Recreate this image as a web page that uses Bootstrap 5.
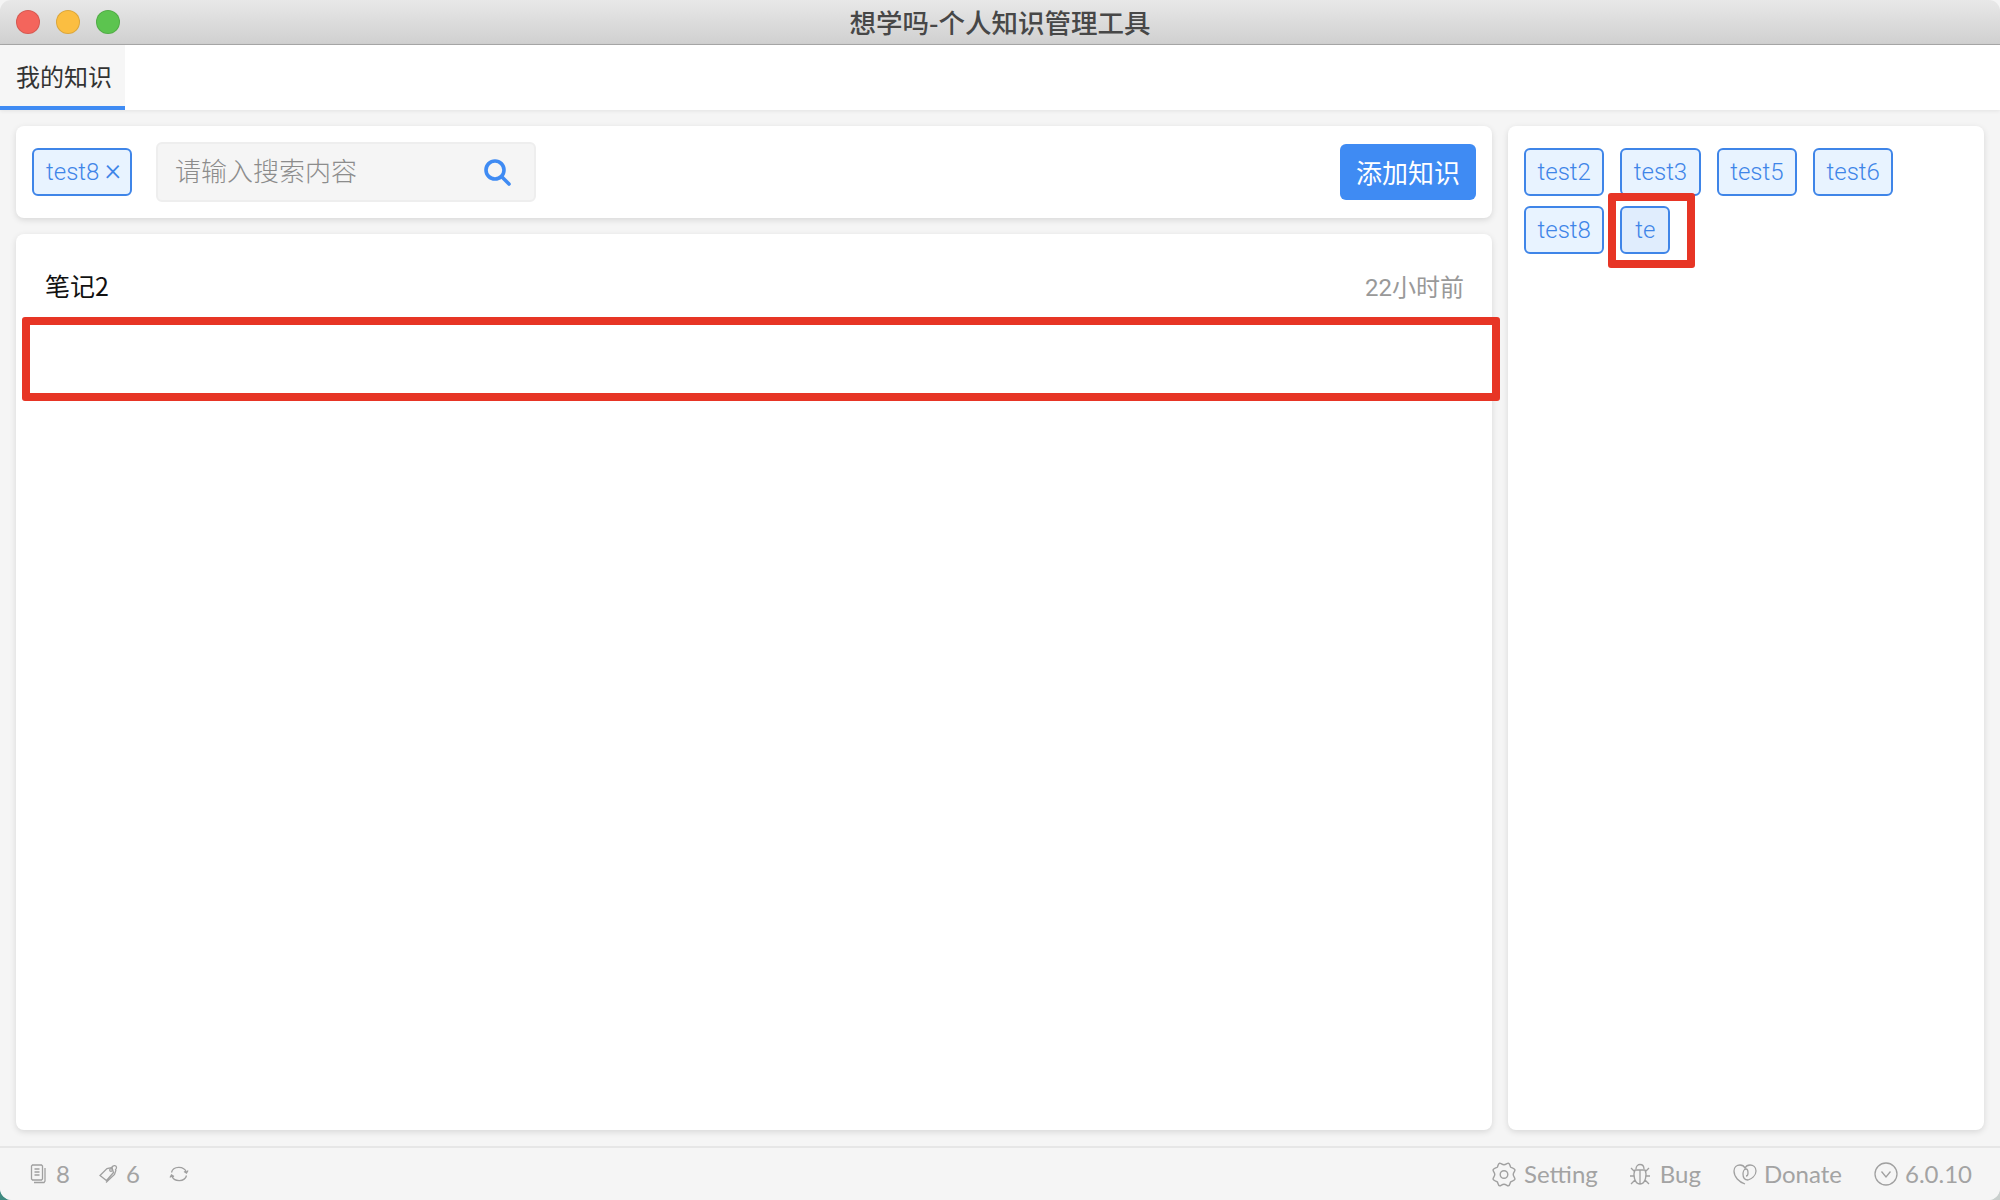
<!DOCTYPE html>
<html lang="zh">
<head>
<meta charset="utf-8">
<title>想学吗-个人知识管理工具</title>
<link href="https://cdn.jsdelivr.net/npm/bootstrap@5.3.0/dist/css/bootstrap.min.css" rel="stylesheet">
<style>
html,body{height:100%;}
body{margin:0;background:linear-gradient(180deg,#f4f4f4 0 600px,transparent 600px),linear-gradient(90deg,#3f8a80 0 50%,#c9cfcd 50% 100%);font-family:Roboto,"Noto Sans CJK SC",sans-serif;font-weight:300;overflow:hidden;}
.win{height:1200px;width:2000px;background:#f5f5f5;border-radius:11px 11px 12px 12px;overflow:hidden;}
.titlebar{height:45px;flex:none;background:linear-gradient(180deg,#e8e8e8,#d0d0d0);border-bottom:1px solid #a8a8a8;position:relative;}
.tl{width:24px;height:24px;border-radius:50%;border:1px solid rgba(0,0,0,.12);}
.tl-r{background:#f4655c;}.tl-y{background:#fbbe41;}.tl-g{background:#5cc44f;}
.wintitle{font-size:26.500px;font-weight:500;color:#474747;font-family:"Noto Sans CJK SC",sans-serif;line-height:44px;}
.tabbar{height:65px;flex:none;background:#fff;box-shadow:0 1px 4px rgba(0,0,0,.08);position:relative;z-index:1;}
.tabitem{width:125px;height:65px;background:#f6f6f6;border-bottom:4px solid #3f8bf3;font-size:24px;color:#333;font-family:"Noto Sans CJK SC",sans-serif;font-weight:400;padding-top:14px;padding-left:16px;line-height:34px;}
.mainarea{flex:1;padding:16px;gap:16px;min-height:0;}
.leftcol{width:1476px;gap:16px;}
.panel{background:#fff;border-radius:8px;box-shadow:0 2px 6px rgba(0,0,0,.12);position:relative;}
.searchpanel{height:92px;padding:0 16px;}
.chip{height:48px;border:2px solid #3f85e8;background:#e8f3ff;color:#3f85e8;border-radius:6px;font-size:24px;line-height:45px;padding:0 11.500px;white-space:nowrap;}
.chip-cur{background:#e0edfd;padding:0 13px;}
.chip-first{width:100px;margin-right:24px;display:flex;align-items:center;justify-content:space-between;padding:0 12px;}
.chipx{font-size:31px;line-height:40px;margin:0 -3px 4px 0;}
.searchbox{width:380px;height:60px;background:#f5f5f5;border:2px solid #eee;border-radius:6px;padding:0 23px 6px 17px;font-size:26px;color:#8c8c8c;font-family:"Noto Sans CJK SC",sans-serif;}
.searchbox svg{margin-top:5px;}
.addbtn{width:136px;height:56px;background:#3f8bf3;border-radius:6px;color:#fff;font-size:26px;font-family:"Noto Sans CJK SC",sans-serif;border:0;padding:0;line-height:50px;}
.addbtn:hover{background:#3f8bf3;color:#fff;}
.listpanel{flex:1;padding:32px 28px 0 29px;}
.notename{font-size:25px;color:#111;font-family:"Noto Sans CJK SC",Roboto,sans-serif;font-weight:400;line-height:38px;}
.notetime{font-size:24px;font-weight:400;color:#999;line-height:44px;}
.tagpanel{width:476px;flex:none;padding:22px 15px 22px 16px;align-content:flex-start;column-gap:16px;row-gap:10px;}
.redmark{position:absolute;border:8px solid #e73525;border-radius:3px;pointer-events:none;}
.mark-note{left:6px;top:83px;width:1478px;height:84px;}
.mark-tag{left:100px;top:67px;width:87px;height:75px;}
.statusbar{height:54px;flex:none;border-top:2px solid #e6e6e6;background:#f5f5f5;font-family:Lato,sans-serif;font-weight:400;font-size:24px;color:#a3a3a3;padding:0 28px 0 30px;}
.statusbar svg{fill:none;stroke:#a0a0a0;stroke-width:1.3;display:block;}
.statgrp{gap:9px;}
.sleft{gap:29px;}
.sright{gap:32px;}
</style>
</head>
<body>
<div class="win d-flex flex-column">
  <div class="titlebar d-flex align-items-center justify-content-center">
    <div class="d-flex position-absolute top-0 start-0" style="gap:16px;padding:10px 0 0 16px">
      <span class="tl tl-r"></span><span class="tl tl-y"></span><span class="tl tl-g"></span>
    </div>
    <span class="wintitle">想学吗-个人知识管理工具</span>
  </div>
  <div class="tabbar"><div class="tabitem">我的知识</div></div>
  <div class="mainarea d-flex">
    <div class="leftcol d-flex flex-column">
      <div class="panel searchpanel d-flex align-items-center">
        <span class="chip chip-first"><span>test8</span><span class="chipx">×</span></span>
        <div class="searchbox d-flex align-items-center justify-content-between">
          <span>请输入搜索内容</span>
          <svg width="28" height="28" viewBox="0 0 28 28" fill="none" stroke="#3f8bf3" stroke-width="3.6" stroke-linecap="round"><circle cx="12" cy="12" r="9"/><path d="M19 19l7 7"/></svg>
        </div>
        <button class="btn addbtn ms-auto" type="button">添加知识</button>
      </div>
      <div class="panel listpanel">
        <div class="d-flex justify-content-between">
          <span class="notename">笔记2</span>
          <span class="notetime">22小时前</span>
        </div>
        <div class="redmark mark-note"></div>
      </div>
    </div>
    <div class="panel tagpanel d-flex flex-wrap">
      <span class="chip">test2</span><span class="chip">test3</span><span class="chip">test5</span><span class="chip">test6</span><span class="chip">test8</span><span class="chip chip-cur">te</span>
      <div class="redmark mark-tag"></div>
    </div>
  </div>
  <div class="statusbar d-flex align-items-center justify-content-between">
    <div class="d-flex align-items-center sleft">
      <div class="d-flex align-items-center statgrp">
        <svg width="17" height="20" viewBox="0 0 17 20"><path d="M2.500 1h9l1 1v13l-1 1h-9l-1-1V2zM4.500 5h5M4.500 8h5M4.500 11h5M15 4v13l-1 1.500H4"/></svg><span>8</span>
      </div>
      <div class="d-flex align-items-center statgrp" style="gap:8px">
        <svg width="19" height="20" viewBox="0 0 19 20"><path d="M1 11.500l7-7 5-1 1.500 5-7 8zM7 18.500l8.500-8 1.500-4.500"/><circle cx="12" cy="6" r="1.300"/><path d="M12.500 4.500c.5-3.500 5-4 5-1 0 1-.5 2-1.500 2.500"/></svg><span>6</span>
      </div>
      <svg width="20" height="20" viewBox="0 0 20 20"><path d="M2.500 8.500C4 2 15 1.500 17.500 8.500M17.500 11.500C16 18 5 18.500 2.500 11.500M15 7.500l2.500 1.500 1.500-2.500M5 12.500L2.500 11 1 13.500"/></svg>
    </div>
    <div class="d-flex align-items-center sright">
      <div class="d-flex align-items-center statgrp" style="gap:7px">
        <svg width="26" height="25" viewBox="1.500 .5 22 23"><path d="M8.500 1.500c1.500 0 2 1.500 4 1.500s2.500-1.500 4-1.500c1.500.5 1.500 2.500 2 3.500 1 1 3 1 4 2.500.5 1.500-1.500 2.500-1.500 4.500s2 3 1.500 4.500c-1 1.500-3 1.500-4 2.500-.5 1-.5 3-2 3.500-1.500 0-2-1.500-4-1.500s-2.500 1.500-4 1.500c-1.500-.5-1.500-2.500-2-3.500-1-1-3-1-4-2.500-.5-1.500 1.500-2.500 1.500-4.500s-2-3-1.500-4.500c1-1.500 3-1.500 4-2.500.5-1 .5-3 2-3.500z"/><circle cx="12.500" cy="12" r="3.500"/></svg><span>Setting</span>
      </div>
      <div class="d-flex align-items-center statgrp" style="gap:10px">
        <svg width="20" height="24" viewBox="0 0 20 24"><path d="M6 7C6 1 14 1 14 7M5 8h10c2 4 1 14-5 14S3 12 5 8zM10 8v14M1 6l4 4M19 6l-4 4M0 14h4M20 14h-4M1 22l4-4M19 22l-4-4"/></svg><span>Bug</span>
      </div>
      <div class="d-flex align-items-center statgrp" style="gap:7px">
        <svg width="24" height="22" viewBox="0 0 24 22"><path d="M12 21C6 19 1 14 1 8c0-4 3-6 6-6 2 0 4 1 5 3 1-2 3-3 5-3 3 0 6 2 6 6 0 5-5 8-8 9-3 0-5-2-5-6 0-2 1-5 3-5s2 2 2 4-1 3-2 3"/></svg><span>Donate</span>
      </div>
      <div class="d-flex align-items-center statgrp" style="gap:7px">
        <svg width="24" height="24" viewBox="0 0 24 24"><circle cx="12" cy="12" r="11"/><path d="M7.500 9.500L12 15l4.500-5.500"/></svg><span>6.0.10</span>
      </div>
    </div>
  </div>
</div>
</body>
</html>
